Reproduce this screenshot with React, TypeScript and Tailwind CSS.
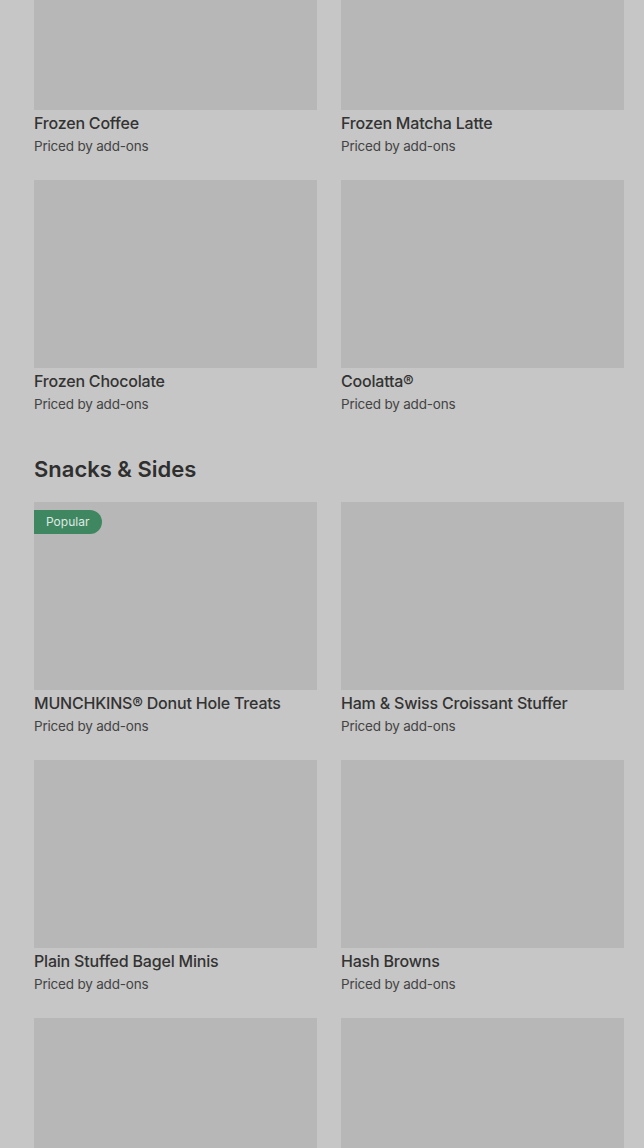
import React from "react";

type Item = { name?: string; popular?: boolean };

const frozen: Item[] = [
  { name: "Frozen Coffee" },
  { name: "Frozen Matcha Latte" },
  { name: "Frozen Chocolate" },
  { name: "Coolatta®" },
];

// last row is below the fold, only the image tops show
const snacks: Item[] = [
  { name: "MUNCHKINS® Donut Hole Treats", popular: true },
  { name: "Ham & Swiss Croissant Stuffer" },
  { name: "Plain Stuffed Bagel Minis" },
  { name: "Hash Browns" },
  {},
  {},
];

function Card({ item }: { item: Item }) {
  return (
    <div className="flex flex-col">
      <div className="relative h-[188px] w-full bg-[#b7b7b7]">
        {item.popular && (
          <span className="absolute left-0 top-[8px] flex h-[24px] items-center rounded-r-full bg-[#3f8760] pl-[12px] pr-[13px] text-[12px] text-[#dfe8e2]">
            Popular
          </span>
        )}
      </div>
      {item.name && (
        <>
          <div className="mt-[3px] text-[16px] font-medium leading-[20px] tracking-[-0.2px] text-[#333333]">
            {item.name}
          </div>
          <div className="mt-[4px] text-[13.5px] leading-[18px] tracking-[-0.2px] text-[#434343]">
            Priced by add-ons
          </div>
        </>
      )}
    </div>
  );
}

function Grid({ items }: { items: Item[] }) {
  return (
    <div className="grid grid-cols-2 gap-x-[24px] gap-y-[25px]">
      {items.map((it, i) => (
        <Card key={i} item={it} />
      ))}
    </div>
  );
}

export default function App() {
  return (
    <div
      className="h-[1148px] overflow-hidden bg-[#c6c6c6]"
      style={{ fontFamily: "Inter, 'Noto Sans', sans-serif" }}
    >
      <div className="-mt-[78px] pl-[34px] pr-[20px]">
        <Grid items={frozen} />
        <h2 className="mt-[42px] mb-[19px] text-[22px] font-semibold leading-[28px] text-[#2f2f2f]">
          Snacks &amp; Sides
        </h2>
        <Grid items={snacks} />
      </div>
    </div>
  );
}
